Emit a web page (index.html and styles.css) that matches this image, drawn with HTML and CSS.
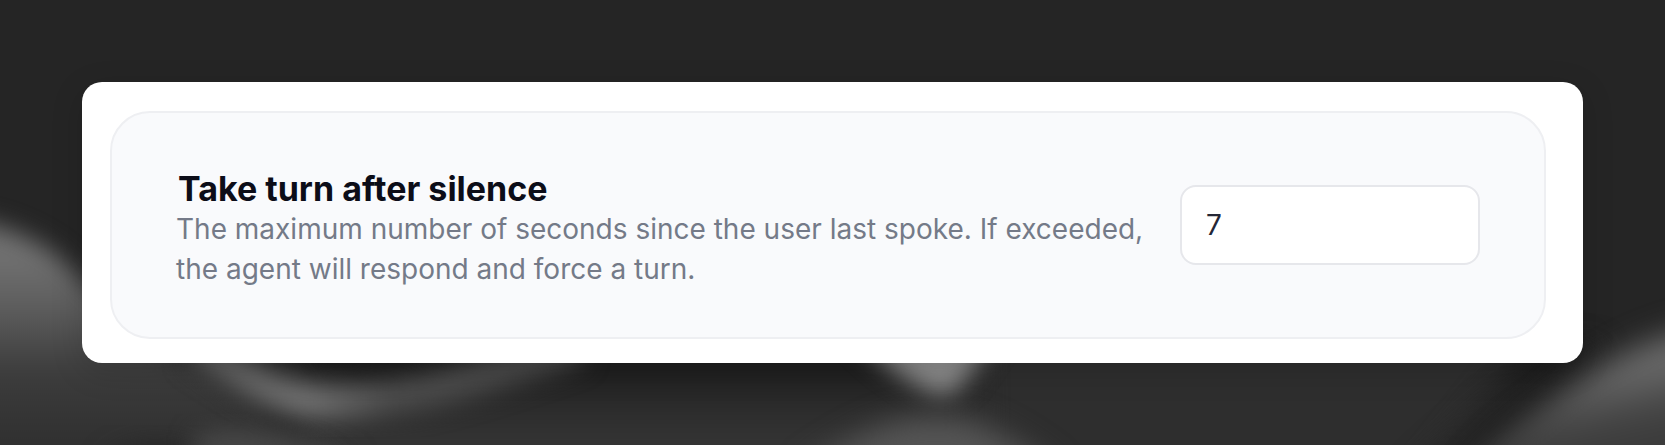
FILE: index.html
```html
<!DOCTYPE html>
<html lang="en">
<head>
<meta charset="utf-8">
<meta name="viewport" content="width=device-width, initial-scale=1">
<title>Take turn after silence</title>
<link rel="stylesheet" href="styles.css">
</head>
<body class="page">
<svg class="backdrop" viewBox="0 0 1665 445" preserveAspectRatio="none" aria-hidden="true">
  <defs>
    <linearGradient id="hill" gradientUnits="userSpaceOnUse" x1="0" y1="205" x2="0" y2="445">
      <stop offset="0" stop-color="#6a6a6a"/><stop offset=".2" stop-color="#727272"/>
      <stop offset=".42" stop-color="#5e5e5e"/><stop offset=".7" stop-color="#3c3c3c"/><stop offset="1" stop-color="#303030"/>
    </linearGradient>
    <linearGradient id="floor" gradientUnits="userSpaceOnUse" x1="0" y1="363" x2="0" y2="445">
      <stop offset="0" stop-color="#1b1b1b"/><stop offset=".4" stop-color="#292929"/><stop offset="1" stop-color="#353535"/>
    </linearGradient>
    <linearGradient id="ribbon" gradientUnits="userSpaceOnUse" x1="200" y1="0" x2="580" y2="0">
      <stop offset="0" stop-color="#5c5c5c"/><stop offset=".28" stop-color="#747474"/>
      <stop offset=".5" stop-color="#4e4e4e"/><stop offset="1" stop-color="#4a4a4a"/>
    </linearGradient>
    <linearGradient id="slope" gradientUnits="userSpaceOnUse" x1="1640" y1="325" x2="1665" y2="445">
      <stop offset="0" stop-color="#686868"/><stop offset=".35" stop-color="#6a6a6a"/>
      <stop offset=".7" stop-color="#444"/><stop offset="1" stop-color="#3a3a3a"/>
    </linearGradient>
    <filter id="soft" x="-30%" y="-60%" width="160%" height="220%" color-interpolation-filters="sRGB"><feGaussianBlur stdDeviation="12"/></filter>
    <filter id="softer" x="-30%" y="-60%" width="160%" height="220%" color-interpolation-filters="sRGB"><feGaussianBlur stdDeviation="15"/></filter>
  </defs>
  <rect width="1665" height="445" fill="#252525"/>
  <path d="M300 345H1580V500H300Z" fill="url(#floor)" filter="url(#softer)"/>
  <path d="M980 325H1540L1400 500H980Z" fill="#2e2e2e" filter="url(#softer)"/>
  <path d="M-60 218C0 218 55 242 90 290C150 345 250 400 380 500H-60Z" fill="url(#hill)" filter="url(#soft)"/>
  <path d="M110 465Q170 425 230 490H110Z" fill="#222" filter="url(#softer)"/>
  <path d="M310 330H500C460 375 390 390 350 378Z" fill="#1b1b1b" filter="url(#soft)"/>
  <path d="M195 345C240 375 280 402 330 402C410 402 480 378 580 345" fill="none" stroke="url(#ribbon)" stroke-width="34" filter="url(#soft)"/>
  <path d="M195 435Q270 422 360 460H195Z" fill="#4a4a4a" filter="url(#soft)"/>
  <path d="M835 315H1010C980 360 965 390 945 396C915 390 875 360 835 315Z" fill="#8c8c8c" filter="url(#soft)"/>
  <path d="M800 475Q880 415 930 418Q980 410 1060 475Z" fill="#555" filter="url(#softer)"/>
  <path d="M1450 480C1510 440 1570 385 1600 355L1590 345C1550 360 1490 405 1410 480Z" fill="#1e1e1e" filter="url(#softer)"/>
  <path d="M1730 322C1655 330 1605 362 1560 395C1530 420 1490 440 1460 490H1730Z" fill="url(#slope)" filter="url(#softer)"/>
</svg>
<main class="card">
  <section class="setting">
    <div class="setting-text">
      <label class="setting-title" for="silence">Take turn after silence</label>
      <p class="setting-note" id="silence-note">The maximum number of seconds since the user last spoke. If exceeded, the agent will respond and force a turn.</p>
    </div>
    <input class="setting-input" id="silence" type="text" inputmode="numeric" value="7" aria-describedby="silence-note">
  </section>
</main>
</body>
</html>
```
FILE: styles.css
```css
* {
  box-sizing: border-box;
}

.page {
  position: relative;
  min-height: 100vh;
  margin: 0;
  padding: 82px;
  overflow-x: hidden;
  background: #252525;
  font-family: Inter, "Liberation Sans", sans-serif;
}

.backdrop {
  position: absolute;
  inset: 0;
  width: 100%;
  height: 100%;
}

.card {
  position: relative;
  padding: 29px 37px 24px 28px;
  border-radius: 20px;
  background: #fff;
  box-shadow: 0 8px 32px rgba(0, 0, 0, 0.15);
}

.setting {
  display: flex;
  align-items: flex-start;
  gap: 32px;
  padding: 56px 64px 48px 64px;
  border: 2px solid #eeeff2;
  border-radius: 40px;
  background: #f9fafc;
}

.setting-text {
  flex: 1;
}

.setting-title {
  display: block;
  padding-left: 2px;
  color: #0c0d18;
  font-size: 34px;
  font-weight: 700;
  line-height: 40px;
}

.setting-note {
  margin: 0;
  color: #747a88;
  font-size: 28px;
  line-height: 40px;
}

.setting-input {
  flex: 0 0 300px;
  width: 300px;
  height: 80px;
  margin-top: 16px;
  padding: 0 24px;
  border: 2px solid #e6e7eb;
  border-radius: 16px;
  background: #fff;
  color: #242736;
  font-family: inherit;
  font-size: 28px;
}
```
